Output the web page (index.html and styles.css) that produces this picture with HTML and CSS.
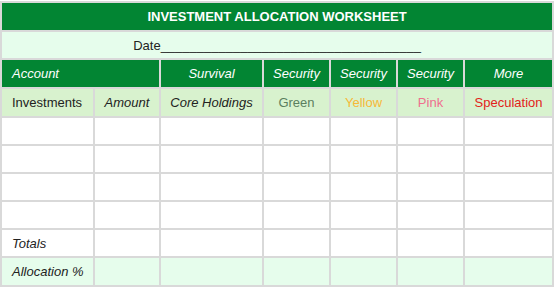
FILE: index.html
```html
<!DOCTYPE html>
<html>
<head>
<meta charset="utf-8">
<link rel="stylesheet" href="styles.css">
</head>
<body>
<table class="sheet">
  <colgroup>
    <col class="c1"><col class="c2"><col class="c3"><col class="c4"><col class="c5"><col class="c6"><col class="c7">
  </colgroup>
  <tr class="title"><td colspan="7">INVESTMENT ALLOCATION WORKSHEET</td></tr>
  <tr class="date"><td colspan="7">Date____________________________________</td></tr>
  <tr class="head">
    <td colspan="2" class="left">Account</td>
    <td>Survival</td>
    <td>Security</td>
    <td>Security</td>
    <td>Security</td>
    <td>More</td>
  </tr>
  <tr class="sub">
    <td class="left upright">Investments</td>
    <td>Amount</td>
    <td>Core Holdings</td>
    <td class="upright green">Green</td>
    <td class="upright yellow">Yellow</td>
    <td class="upright pink">Pink</td>
    <td class="upright red">Speculation</td>
  </tr>
  <tr class="blank"><td></td><td></td><td></td><td></td><td></td><td></td><td></td></tr>
  <tr class="blank"><td></td><td></td><td></td><td></td><td></td><td></td><td></td></tr>
  <tr class="blank"><td></td><td></td><td></td><td></td><td></td><td></td><td></td></tr>
  <tr class="blank"><td></td><td></td><td></td><td></td><td></td><td></td><td></td></tr>
  <tr class="blank"><td class="left label">Totals</td><td></td><td></td><td></td><td></td><td></td><td></td></tr>
  <tr class="alloc"><td class="left label">Allocation %</td><td></td><td></td><td></td><td></td><td></td><td></td></tr>
</table>
</body>
</html>
```

FILE: styles.css
```css
html, body {
  margin: 0;
  padding: 0;
  background: #ffffff;
}
body {
  padding: 1px 0 0 0;
  font-family: "Liberation Sans", Arial, sans-serif;
  font-size: 13px;
}
.sheet {
  border-collapse: collapse;
  table-layout: fixed;
  width: 552px;
  border: 2px solid #d9d9d9;
}
.c1 { width: 93px; }
.c2 { width: 66px; }
.c3 { width: 103px; }
.c4 { width: 67px; }
.c5 { width: 67px; }
.c6 { width: 67px; }
.c7 { width: 89px; }
.sheet td {
  border: 2px solid #d9d9d9;
  height: 26px;
  padding: 0;
  text-align: center;
  vertical-align: middle;
  color: #222222;
}
.title td {
  background: #028533;
  color: #ffffff;
  font-weight: bold;
  height: 27px;
}
.date td {
  background: #e6fdec;
  color: #222222;
}
.head td {
  background: #028533;
  color: #ffffff;
  font-style: italic;
  height: 27px;
}
.sub td {
  background: #d8f2ce;
  font-style: italic;
  height: 27px;
}
.sheet td.left {
  text-align: left;
  padding-left: 10px;
}
.sheet td.upright { font-style: normal; }
.sheet td.green { color: #5b7f5f; }
.sheet td.yellow { color: #f7b838; }
.sheet td.pink { color: #ef6f8e; }
.sheet td.red { color: #e2231a; }
.blank td { background: #ffffff; }
.sheet td.label { font-style: italic; }
.alloc td {
  background: #e6fdec;
  height: 27px;
}
```
